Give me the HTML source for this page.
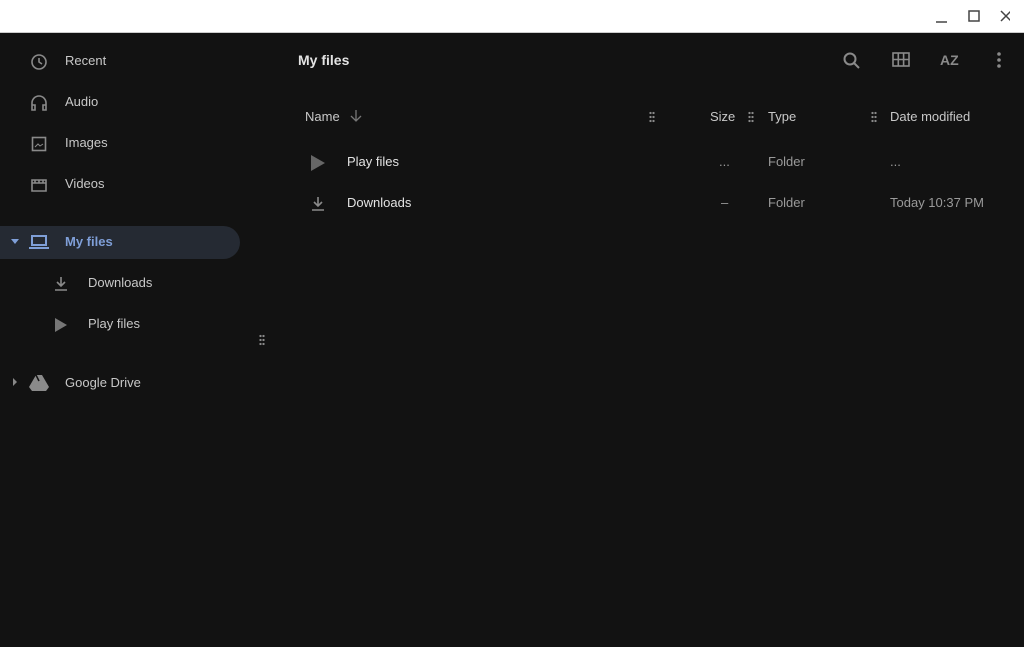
<!DOCTYPE html>
<html><head><style>
body{margin:0;width:1024px;height:647px;background:#121212;font-family:"Liberation Sans",sans-serif;overflow:hidden;position:relative;color:#e3e3e3}
.t{position:absolute;font-size:13px;white-space:nowrap}
.s{color:#c8c8c8}
.g{color:#9a9a9a}
svg{position:absolute}
.ic{fill:none;stroke:#8a8a8a;stroke-width:1.6}
.dots{position:absolute;width:6px;height:12px;background:radial-gradient(circle,#8a8a8a 1px,transparent 1.3px) 0 0/3px 4px}
</style></head><body>
<div style="position:absolute;left:0;top:0;width:1024px;height:32px;background:#fff;border-bottom:1px solid #ccc"></div>
<svg style="left:930px;top:8px" width="80" height="18"><path d="M6 14h11" stroke="#444" stroke-width="1.5"/><rect x="39" y="3" width="10" height="10" fill="none" stroke="#444" stroke-width="1.5"/><path d="M71 3l10 10M81 3L71 13" stroke="#444" stroke-width="1.5"/></svg>

<div style="position:absolute;left:0;top:226px;width:240px;height:33px;background:#252a33;border-radius:0 17px 17px 0"></div>
<!-- sidebar icons -->
<svg style="left:30px;top:53px" width="18" height="18" class="ic"><circle cx="9" cy="9" r="7"/><path d="M9 5v4l3 2"/></svg>
<svg style="left:30px;top:94px" width="18" height="18" class="ic"><path d="M2 14V9a7 7 0 0114 0v5M2 11h3v5H2zM13 11h3v5h-3z"/></svg>
<svg style="left:30px;top:135px" width="18" height="18" class="ic"><rect x="2.5" y="2.5" width="13" height="13"/><path d="M5 12l3-3 2 2 3-2" stroke-width="1"/></svg>
<svg style="left:30px;top:176px" width="18" height="18" class="ic"><path d="M2 4h14v11H2zM2 7h14M5 4v3M9 4v3M13 4v3"/></svg>
<svg style="left:10px;top:236px" width="10" height="10"><path d="M1 3h8L5 8z" fill="#7f9fd8"/></svg>
<svg style="left:29px;top:233px" width="20" height="18"><rect x="3" y="3" width="14" height="9" fill="none" stroke="#7f9fd8" stroke-width="2"/><path d="M0 14h20v2H0z" fill="#7f9fd8"/></svg>
<svg style="left:52px;top:275px" width="18" height="18" class="ic"><path d="M9 2v9M5 7l4 4 4-4M3 15h12"/></svg>
<svg style="left:52px;top:316px" width="18" height="18"><path d="M3 2l12 7-12 7z" fill="#777"/></svg>
<svg style="left:10px;top:377px" width="10" height="10"><path d="M3 1l4 4-4 4z" fill="#888"/></svg>
<svg style="left:29px;top:374px" width="20" height="18"><path d="M7 1h6l7 12-3 4H3l-3-4z" fill="#8a8a8a"/><path d="M7 1l3 6" stroke="#121212" stroke-width="1.5"/></svg>

<div class="t s" style="left:65px;top:53px">Recent</div>
<div class="t s" style="left:65px;top:94px">Audio</div>
<div class="t s" style="left:65px;top:135px">Images</div>
<div class="t s" style="left:65px;top:176px">Videos</div>
<div class="t" style="left:65px;top:234px;color:#7f9fd8;font-weight:bold">My files</div>
<div class="t s" style="left:88px;top:275px">Downloads</div>
<div class="t s" style="left:88px;top:316px">Play files</div>
<div class="t s" style="left:65px;top:375px">Google Drive</div>
<div class="dots" style="left:259px;top:334px;height:12px"></div>

<div class="t" style="left:298px;top:52px;font-size:14px;font-weight:bold">My files</div>
<svg style="left:842px;top:51px" width="20" height="20" class="ic" style=""><circle cx="8" cy="8" r="5.5" stroke="#8a8a8a" stroke-width="2" fill="none"/><path d="M12 12l5 5" stroke="#8a8a8a" stroke-width="2"/></svg>
<svg style="left:891px;top:51px" width="20" height="18"><rect x="2" y="2" width="16" height="13" fill="none" stroke="#8a8a8a" stroke-width="1.6"/><path d="M2 8.5h16M7.3 2v13M12.6 2v13" stroke="#8a8a8a" stroke-width="1.6"/></svg>
<div class="t" style="left:940px;top:52px;font-size:14px;color:#8a8a8a;font-weight:bold">AZ</div>
<svg style="left:994px;top:51px" width="10" height="18"><circle cx="5" cy="3" r="1.8" fill="#8a8a8a"/><circle cx="5" cy="9" r="1.8" fill="#8a8a8a"/><circle cx="5" cy="15" r="1.8" fill="#8a8a8a"/></svg>

<div class="t s" style="left:305px;top:109px">Name</div>
<svg style="left:349px;top:109px" width="14" height="14"><path d="M7 1v11M2 7l5 5 5-5" stroke="#777" stroke-width="1.3" fill="none"/></svg>
<div class="dots" style="left:649px;top:111px"></div>
<div class="t s" style="left:710px;top:109px">Size</div>
<div class="dots" style="left:748px;top:111px"></div>
<div class="t s" style="left:768px;top:109px">Type</div>
<div class="dots" style="left:871px;top:111px"></div>
<div class="t s" style="left:890px;top:109px">Date modified</div>

<svg style="left:309px;top:154px" width="18" height="18"><path d="M2 1l14 8-14 8z" fill="#666"/></svg>
<div class="t" style="left:347px;top:154px">Play files</div>
<div class="t g" style="left:719px;top:154px">...</div>
<div class="t g" style="left:768px;top:154px">Folder</div>
<div class="t g" style="left:890px;top:154px">...</div>
<svg style="left:309px;top:195px" width="18" height="18" class="ic"><path d="M9 2v9M5 7l4 4 4-4M3 15h12"/></svg>
<div class="t" style="left:347px;top:195px">Downloads</div>
<div class="t g" style="left:721px;top:195px">–</div>
<div class="t g" style="left:768px;top:195px">Folder</div>
<div class="t g" style="left:890px;top:195px">Today 10:37 PM</div>
</body></html>
